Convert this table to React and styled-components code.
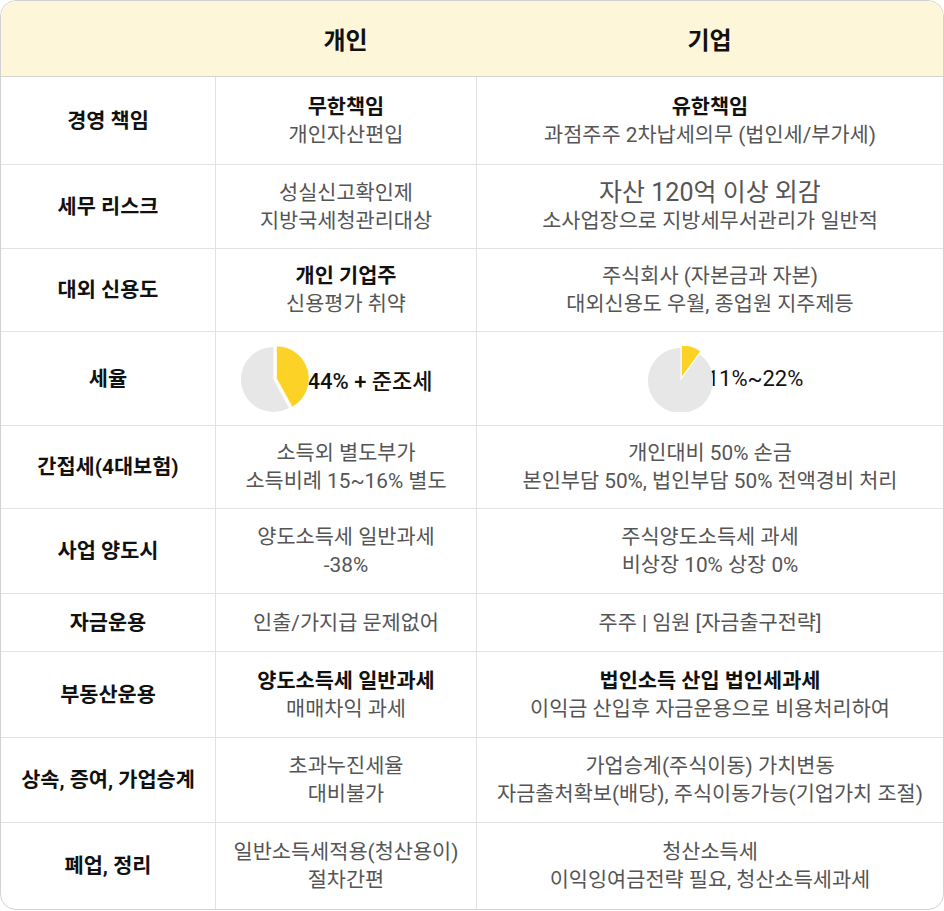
import React from 'react';
import styled, { createGlobalStyle } from 'styled-components';

const GlobalStyle = createGlobalStyle`
  * { box-sizing: border-box; }
  body {
    margin: 0;
    background: #ffffff;
    font-family: Roboto, "Noto Sans CJK KR", sans-serif;
  }
`;

const Table = styled.div`
  width: 944px;
  border: 1px solid #d2d2d2;
  border-radius: 16px;
  overflow: hidden;
  background: #ffffff;
`;

const HeaderRow = styled.div`
  display: grid;
  grid-template-columns: 214px 261px 1fr;
  height: 76px;
  background: #fef6d9;
  border-bottom: 1px solid #d4d4d4;
`;

const HeaderCell = styled.div`
  display: flex;
  align-items: center;
  justify-content: center;
  font-size: 24px;
  font-weight: 700;
  color: #111111;
`;

const Row = styled.div`
  display: grid;
  grid-template-columns: 214px 261px 1fr;
  border-bottom: 1px solid #e2e2e2;

  &:last-child {
    border-bottom: none;
  }
`;

const Cell = styled.div`
  display: flex;
  flex-direction: column;
  align-items: center;
  justify-content: center;
  padding: ${(p) => p.$pad}px 4px;
  text-align: center;
  border-left: ${(p) => (p.$label ? 'none' : '1px solid #e2e2e2')};
  font-size: 20.8px;
  font-weight: ${(p) => (p.$label ? 700 : 400)};
  color: ${(p) => (p.$label ? '#111111' : '#555555')};
  line-height: 28px;
`;

const Line = styled.div`
  white-space: nowrap;
  font-weight: ${(p) => (p.$bold ? 700 : 400)};
  color: ${(p) => (p.$bold ? '#111111' : 'inherit')};
  font-size: ${(p) => (p.$big ? '25px' : 'inherit')};
`;

const PieWrap = styled.div`
  display: flex;
  align-items: center;
  justify-content: center;
  padding: ${(p) => p.$pad}px 8px;
  padding-left: ${(p) => p.$padLeft || 8}px;
  padding-right: ${(p) => p.$padRight || 8}px;
  border-left: 1px solid #e2e2e2;
`;

const PieSvg = styled.svg`
  flex: none;
  position: relative;
  z-index: 1;
`;

const PieLabel = styled.span`
  font-size: 22px;
  font-weight: ${(p) => (p.$strong ? 500 : 400)};
  color: #111111;
  white-space: nowrap;
  margin-left: ${(p) => p.$overlap}px;
`;

const arcPath = (cx, cy, r, a0, a1) => {
  const p = (a) => [cx + r * Math.sin(a), cy - r * Math.cos(a)];
  const [x0, y0] = p(a0);
  const [x1, y1] = p(a1);
  const large = a1 - a0 > Math.PI ? 1 : 0;
  return `M${cx} ${cy} L${x0} ${y0} A${r} ${r} 0 ${large} 1 ${x1} ${y1} Z`;
};

const Pie = ({ share }) => {
  const c = 35;
  const r = 32.5;
  const end = share * Math.PI * 2;
  const mid = end / 2;
  const gMid = (end + Math.PI * 2) / 2;
  const off = 1.6;
  return (
    <PieSvg width="70" height="66" viewBox="0 2 70 66">
      <path
        d={arcPath(c + off * Math.sin(gMid), c - off * Math.cos(gMid), r, end, Math.PI * 2)}
        fill="#e7e7e7"
      />
      <path
        d={arcPath(c + off * Math.sin(mid), c - off * Math.cos(mid), r, 0, end)}
        fill="#fdd226"
        stroke="#ffffff"
        strokeWidth="0.6"
      />
    </PieSvg>
  );
};

// pad = vertical padding of each row's cells
const rows = [
  {
    label: '경영 책임',
    pad: 15.5,
    a: [{ t: '무한책임', bold: true }, { t: '개인자산편입' }],
    b: [{ t: '유한책임', bold: true }, { t: '과점주주 2차납세의무 (법인세/부가세)' }],
  },
  {
    label: '세무 리스크',
    pad: 13.5,
    a: [{ t: '성실신고확인제' }, { t: '지방국세청관리대상' }],
    b: [{ t: '자산 120억 이상 외감', big: true }, { t: '소사업장으로 지방세무서관리가 일반적' }],
  },
  {
    label: '대외 신용도',
    pad: 13,
    a: [{ t: '개인 기업주', bold: true }, { t: '신용평가 취약' }],
    b: [{ t: '주식회사 (자본금과 자본)' }, { t: '대외신용도 우월, 종업원 지주제등' }],
  },
  { label: '세율', pad: 13.5, pie: true },
  {
    label: '간접세(4대보험)',
    pad: 13,
    a: [{ t: '소득외 별도부가' }, { t: '소득비례 15~16% 별도' }],
    b: [{ t: '개인대비 50% 손금' }, { t: '본인부담 50%, 법인부담 50% 전액경비 처리' }],
  },
  {
    label: '사업 양도시',
    pad: 14,
    a: [{ t: '양도소득세 일반과세' }, { t: '-38%' }],
    b: [{ t: '주식양도소득세 과세' }, { t: '비상장 10% 상장 0%' }],
  },
  {
    label: '자금운용',
    pad: 14.5,
    a: [{ t: '인출/가지급 문제없어' }],
    b: [{ t: '주주 | 임원 [자금출구전략]' }],
  },
  {
    label: '부동산운용',
    pad: 14.5,
    a: [{ t: '양도소득세 일반과세', bold: true }, { t: '매매차익 과세' }],
    b: [{ t: '법인소득 산입 법인세과세', bold: true }, { t: '이익금 산입후 자금운용으로 비용처리하여' }],
  },
  {
    label: '상속, 증여, 가업승계',
    pad: 14,
    a: [{ t: '초과누진세율' }, { t: '대비불가' }],
    b: [{ t: '가업승계(주식이동) 가치변동' }, { t: '자금출처확보(배당), 주식이동가능(기업가치 조절)' }],
  },
  {
    label: '폐업, 정리',
    pad: 15,
    a: [{ t: '일반소득세적용(청산용이)' }, { t: '절차간편' }],
    b: [{ t: '청산소득세' }, { t: '이익잉여금전략 필요, 청산소득세과세' }],
  },
];

const Lines = ({ items }) =>
  items.map((l) => (
    <Line key={l.t} $bold={l.bold} $big={l.big}>
      {l.t}
    </Line>
  ));

export default function App() {
  return (
    <>
      <GlobalStyle />
      <Table>
        <HeaderRow>
          <HeaderCell />
          <HeaderCell>개인</HeaderCell>
          <HeaderCell>기업</HeaderCell>
        </HeaderRow>
        {rows.map((r) => (
          <Row key={r.label}>
            <Cell $label $pad={r.pad}>{r.label}</Cell>
            {r.pie ? (
              <>
                <PieWrap $pad={r.pad} $padRight={27}>
                  <Pie share={0.42} />
                  <PieLabel $strong $overlap={-3}>44% + 준조세</PieLabel>
                </PieWrap>
                <PieWrap $pad={r.pad} $padLeft={37}>
                  <Pie share={0.1} />
                  <PieLabel $overlap={-9}>11%~22%</PieLabel>
                </PieWrap>
              </>
            ) : (
              <>
                <Cell $pad={r.pad}>
                  <Lines items={r.a} />
                </Cell>
                <Cell $pad={r.pad}>
                  <Lines items={r.b} />
                </Cell>
              </>
            )}
          </Row>
        ))}
      </Table>
    </>
  );
}
